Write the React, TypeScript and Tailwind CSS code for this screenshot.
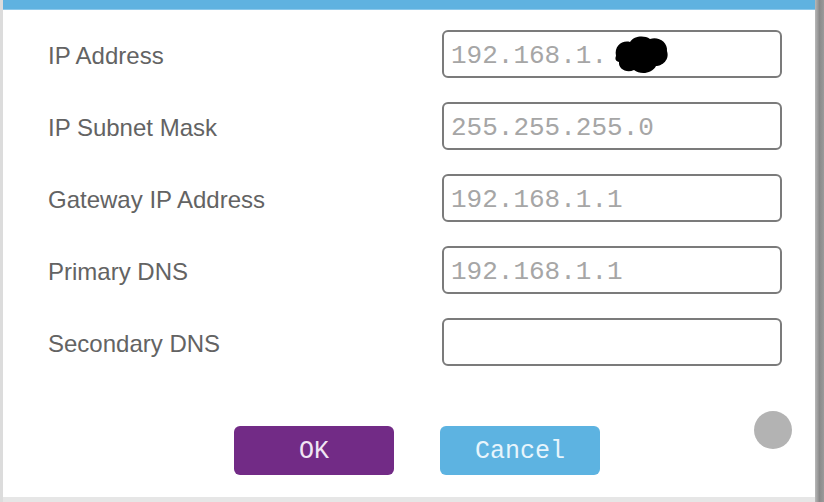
import React from "react";

const rows: { label: string; value: string; masked?: boolean }[] = [
  { label: "IP Address", value: "192.168.1.", masked: true },
  { label: "IP Subnet Mask", value: "255.255.255.0" },
  { label: "Gateway IP Address", value: "192.168.1.1" },
  { label: "Primary DNS", value: "192.168.1.1" },
  { label: "Secondary DNS", value: "" },
];

export default function App() {
  return (
    <div className="relative w-[824px] h-[502px] overflow-hidden bg-[#e6e6e6] flex">
      <div className="w-[3px] bg-[#dcdcdc]" />
      <div className="w-[812px] h-[497px] bg-white flex flex-col">
        <div className="h-[10px] bg-[#5fb2e0] border-b border-[#8cc8ea]" />
        <div className="flex flex-col gap-[24px] pt-[20px] pl-[45px]">
          {rows.map((r) => (
            <div key={r.label} className="flex items-center h-[48px]">
              <div
                className="w-[394px] pt-[3px] text-[24px] text-[#636363] leading-none"
                style={{ fontFamily: "'Liberation Sans', Arial, sans-serif" }}
              >
                {r.label}
              </div>
              <div className="relative w-[340px] h-[48px] border-2 border-[#7b7b7b] rounded-[6px] flex items-center pl-[7px] pt-[3px]">
                <span
                  className="text-[26px] text-[#a6a6a6] leading-none"
                  style={{ fontFamily: "'Liberation Mono', 'Courier New', monospace" }}
                >
                  {r.value}
                </span>
                {r.masked && (
                  <svg
                    className="absolute left-[167px] top-[2px]"
                    width="60"
                    height="42"
                    viewBox="0 0 58 42"
                  >
                    <path
                      d="M4 22 C2 12 10 6 18 8 C22 2 32 1 38 5 C46 2 56 8 55 17 C58 26 50 32 44 32 C40 40 28 41 22 36 C14 40 6 34 7 28 C3 27 3 24 4 22 Z"
                      fill="#000"
                    />
                  </svg>
                )}
              </div>
            </div>
          ))}
        </div>
        <div className="flex gap-[46px] pl-[231px] mt-[60px]">
          <div
            className="w-[160px] h-[49px] rounded-[6px] bg-[#722b86] text-[#f0e6f4] flex items-center justify-center text-[25px] pt-[2px]"
            style={{ fontFamily: "'Liberation Mono', 'Courier New', monospace" }}
          >
            OK
          </div>
          <div
            className="w-[160px] h-[49px] rounded-[6px] bg-[#5db3e1] text-[#e8f5fc] flex items-center justify-center text-[25px] pt-[2px]"
            style={{ fontFamily: "'Liberation Mono', 'Courier New', monospace" }}
          >
            Cancel
          </div>
        </div>
      </div>
      <div className="w-[9px] h-full bg-gradient-to-r from-[#b8b8b8] via-[#8a8a8a] to-[#9a9a9a]" />
      <div className="absolute left-[754px] top-[411px] w-[38px] h-[38px] rounded-full bg-[#b3b3b3]" />
    </div>
  );
}
